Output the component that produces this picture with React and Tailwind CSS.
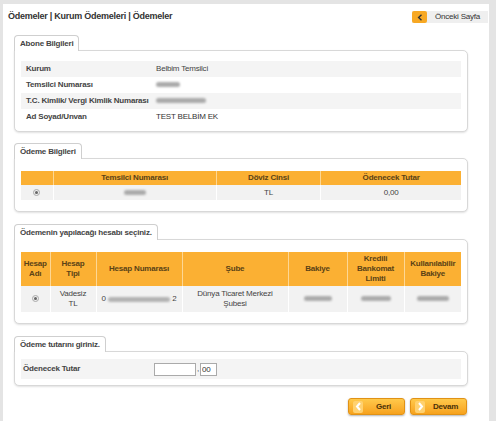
import React from "react";

const Blur = ({ w = 40 }) => (
  <span
    className="inline-block h-[5px] rounded-full bg-[#ababab] blur-[1.2px] align-middle"
    style={{ width: w }}
  />
);

function Section({ title, className = "", children }) {
  return (
    <div className={className}>
      <div className="flex">
        <div className="relative z-10 -mb-px flex h-[16px] items-center rounded-t-[4px] border border-b-0 border-[#cfcfcf] bg-white px-[5px] text-[8px] font-bold text-[#444]">
          {title}
        </div>
      </div>
      <div className="rounded-b-[5px] rounded-tr-[5px] border border-[#d8d8d8] bg-white px-[6px] shadow-[0_1px_2px_rgba(0,0,0,0.12)]">
        {children}
      </div>
    </div>
  );
}

function Radio() {
  return (
    <span className="inline-flex h-[7px] w-[7px] items-center justify-center rounded-full border border-[#aaa] bg-[#eee] align-middle">
      <span className="h-[3px] w-[3px] rounded-full bg-[#666]" />
    </span>
  );
}

const th = "bg-[#fbb033] border-r border-[#fdd794] last:border-r-0 text-[8px] font-bold text-[#5a4216] text-center leading-[10px] px-[2px]";
const td = "bg-[#f2f2f2] border-r border-white last:border-r-0 text-[8px] text-[#444] text-center leading-[10px]";

export default function App() {
  return (
    <div
      className="h-[421px] w-[496px] overflow-hidden bg-[#e4e4e4] pl-[3px] pt-[4px] tracking-[-0.2px]"
      style={{ fontFamily: "'Liberation Sans', Arial, sans-serif" }}
    >
      <div className="h-[417px] w-[486px] bg-white px-[11px] pt-[6px]">
        <div className="-mx-[6px] flex h-[14px] items-center justify-between">
          <h1 className="text-[9px] font-bold tracking-[-0.25px] text-[#333]">Ödemeler | Kurum Ödemeleri | Ödemeler</h1>
          <button className="mr-[-4px] flex h-[12px] w-[76px] items-center bg-[#efefef] text-[8px] text-[#333]">
            <span className="flex h-[12px] w-[15px] items-center justify-center rounded-[2px] bg-[#f7a823]">
              <svg width="6" height="7" viewBox="0 0 6 7">
                <path d="M4.5 0.8 L1.6 3.5 L4.5 6.2" fill="none" stroke="#333" strokeWidth="1.4" />
              </svg>
            </span>
            <span className="flex-1 text-center">Önceki Sayfa</span>
          </button>
        </div>

        <div className="w-[454px]">
          <Section title="Abone Bilgileri" className="mt-[11px]">
            <div className="pt-[10px] pb-[6px] text-[8px] text-[#444]">
              {[
                ["Kurum", "Belbim Temsilci"],
                ["Temsilci Numarası", <Blur w={24} />],
                ["T.C. Kimlik/ Vergi Kimlik Numarası", <Blur w={50} />],
                ["Ad Soyad/Unvan", <span className="text-[#333]">TEST BELBİM EK</span>],
              ].map(([l, v], i) => (
                <div
                  key={i}
                  className={`flex h-[16px] items-center ${i % 2 === 0 ? "bg-[#f4f4f4]" : "bg-white"}`}
                >
                  <div className="w-[135px] pl-[5px] font-bold">{l}</div>
                  <div>{v}</div>
                </div>
              ))}
            </div>
          </Section>

          <Section title="Ödeme Bilgileri" className="mt-[11px]">
            <div className="pt-[12px] pb-[11px]">
              <table className="w-full border-collapse">
                <thead>
                  <tr className="h-[14px]">
                    <th className={`${th} w-[32px]`}></th>
                    <th className={th}>Temsilci Numarası</th>
                    <th className={th}>Döviz Cinsi</th>
                    <th className={th}>Ödenecek Tutar</th>
                  </tr>
                </thead>
                <tbody>
                  <tr className="h-[15px]">
                    <td className={td}><Radio /></td>
                    <td className={td}><Blur w={22} /></td>
                    <td className={td}>TL</td>
                    <td className={td}>0,00</td>
                  </tr>
                </tbody>
              </table>
            </div>
          </Section>

          <Section title="Ödemenin yapılacağı hesabı seçiniz." className="mt-[12px]">
            <div className="pt-[12px] pb-[11px]">
              <table className="w-full border-collapse">
                <thead>
                  <tr className="h-[34px]">
                    <th className={`${th} w-[29px]`}>Hesap<br />Adı</th>
                    <th className={`${th} w-[46px]`}>Hesap<br />Tipi</th>
                    <th className={`${th} w-[86px]`}>Hesap Numarası</th>
                    <th className={`${th} w-[106px]`}>Şube</th>
                    <th className={`${th} w-[59px]`}>Bakiye</th>
                    <th className={`${th} w-[57px]`}>Kredili<br />Bankomat<br />Limiti</th>
                    <th className={th}>Kullanılabilir<br />Bakiye</th>
                  </tr>
                </thead>
                <tbody>
                  <tr className="h-[26px]">
                    <td className={td}><Radio /></td>
                    <td className={td}>Vadesiz<br />TL</td>
                    <td className={`${td} text-left`}>
                      <div className="flex items-center px-[5px]">
                        <span>0</span>
                        <span className="mx-[2px] h-[5px] flex-1 rounded-full bg-[#b3b3b3] blur-[1.2px]" />
                        <span>2</span>
                      </div>
                    </td>
                    <td className={td}>Dünya Ticaret Merkezi<br />Şubesi</td>
                    <td className={td}><Blur w={28} /></td>
                    <td className={td}><Blur w={30} /></td>
                    <td className={td}><Blur w={32} /></td>
                  </tr>
                </tbody>
              </table>
            </div>
          </Section>

          <Section title="Ödeme tutarını giriniz." className="mt-[12px]">
            <div className="pt-[7px] pb-[6px]">
              <div className="flex h-[20px] items-center bg-[#f4f4f4] text-[8px] font-bold text-[#444]">
                <div className="w-[133px] pl-[2px]">Ödenecek Tutar</div>
                <input className="h-[13px] w-[42px] border border-[#aaa] bg-white" />
                <span className="mx-[1px] font-normal">,</span>
                <input
                  defaultValue="00"
                  className="h-[13px] w-[17px] border border-[#aaa] bg-white px-[1px] text-[8px] font-normal text-[#333]"
                />
              </div>
            </div>
          </Section>

          <div className="mt-[12px] flex justify-end gap-[5px] pr-[1px]">
            {[
              ["Geri", "M5 1 L2 4.5 L5 8"],
              ["Devam", "M2 1 L5 4.5 L2 8"],
            ].map(([t, d]) => (
              <button
                key={t}
                className="flex h-[17px] w-[57px] items-center rounded-[3px] border border-[#e09216] bg-gradient-to-b from-[#ffc94a] to-[#f7a21b] pl-[4px] text-[8px] font-bold text-[#4a3208] shadow-[0_1px_2px_rgba(0,0,0,0.3)]"
              >
                <span className="flex h-[12px] w-[10px] items-center justify-center rounded-[2px] bg-[#ffd170]">
                  <svg width="7" height="9" viewBox="0 0 7 9">
                    <path d={d} fill="none" stroke="#fff" strokeWidth="2" />
                  </svg>
                </span>
                <span className="flex-1 text-center">{t}</span>
              </button>
            ))}
          </div>
        </div>
      </div>
    </div>
  );
}
